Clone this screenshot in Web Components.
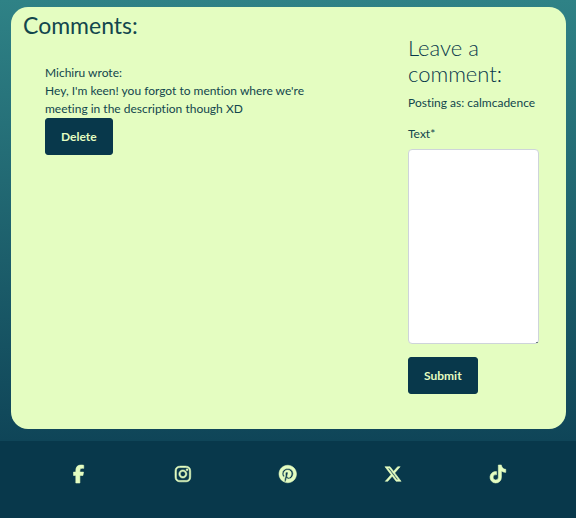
<!DOCTYPE html>
<html lang="en">
<head>
<meta charset="utf-8">
<meta name="viewport" content="width=device-width, initial-scale=1">
<title>Comments</title>
<style>
  :root { --lime: #e4fdc1; --navy: #08384b; --ink: #12464d; }
  html { background: var(--navy); }
  body { margin: 0; font-family: Lato, "Liberation Sans", sans-serif; font-size: 12px; font-weight: 400; line-height: 18px; font-variant-ligatures: none; color: var(--ink); }
</style>
</head>
<body>
<event-page>
  <comments-card>
    <comment-list slot="list">
      <user-comment author="Michiru">Hey, I'm keen! you forgot to mention where we're meeting in the description though XD</user-comment>
    </comment-list>
    <comment-form slot="form" user="calmcadence"></comment-form>
  </comments-card>
  <social-footer slot="footer"></social-footer>
</event-page>
<script>
const define = (name, html, setup) => customElements.define(name, class extends HTMLElement {
  connectedCallback() {
    if (this.shadowRoot) return;
    this.attachShadow({ mode: "open" }).innerHTML = html;
    if (setup) setup(this, this.shadowRoot);
  }
});

define("event-page", `
  <style>
    :host { display: flex; flex-direction: column; min-height: 100vh; }
    main { padding: 7px 10px 12px 11px; background: linear-gradient(#2f8286, #0f4558); }
  </style>
  <main><slot></slot></main>
  <slot name="footer"></slot>`);

define("comments-card", `
  <style>
    :host { display: grid; grid-template-columns: minmax(0, 2fr) minmax(0, 1fr); box-sizing: border-box; background: var(--lime); border-radius: 17px; }
    .form { padding: 28px 27px 35px 27px; }
  </style>
  <slot name="list"></slot>
  <div class="form"><slot name="form"></slot></div>`);

define("comment-list", `
  <style>
    :host { display: block; padding: 4px 0 0 12px; }
    h2 { margin: 0; font-size: 23px; font-weight: 400; line-height: 28px; }
    .items { display: grid; gap: 20px; padding: 25px 60px 0 22px; }
  </style>
  <h2>Comments:</h2>
  <div class="items"><slot></slot></div>`);

define("pill-button", `
  <style>
    :host { display: block; }
    button { display: block; margin: 0; padding: 9px 15px; border: 1px solid var(--navy); border-radius: 3px; background: var(--navy); color: var(--lime); font: 700 12px/17px Lato, "Liberation Sans", sans-serif; cursor: pointer; }
  </style>
  <button type="button"><slot></slot></button>`);

define("user-comment", `
  <style>
    :host { display: block; }
    p { margin: 0; }
  </style>
  <p class="author"></p>
  <p><slot></slot></p>
  <pill-button>Delete</pill-button>`, (host, root) => {
  root.querySelector(".author").textContent = host.getAttribute("author") + " wrote:";
});

define("comment-form", `
  <style>
    :host { display: block; }
    h3 { margin: 0 0 7px; font-size: 22px; font-weight: 300; line-height: 26px; color: var(--navy); }
    p { margin: 0 0 13px; }
    label { display: block; margin-bottom: 6px; }
    textarea { display: block; box-sizing: border-box; width: 100%; height: 195px; margin: 0 0 13px; padding: 6px 12px; border: 1px solid #ced4da; border-radius: 4px; background: #fff; color: var(--ink); font: inherit; resize: vertical; }
    textarea::-webkit-resizer { background: linear-gradient(#6b7c80, #6b7c80) right bottom / 2px 1px no-repeat; }
  </style>
  <form>
    <h3>Leave a comment:</h3>
    <p></p>
    <label for="text">Text*</label>
    <textarea id="text" required></textarea>
    <pill-button>Submit</pill-button>
  </form>`, (host, root) => {
  root.querySelector("p").textContent = "Posting as: " + host.getAttribute("user");
});

const icons = [
  ["Facebook", "0 0 320 512", "M80 299.3V512H196V299.3h86.5l18-97.8H196V166.9c0-51.7 20.3-71.5 72.7-71.5c16.3 0 29.4 .4 37 1.2V7.9C291.4 4 256.4 0 236.2 0C129.3 0 80 50.5 80 159.4v42.1H14v97.8H80z"],
  ["Instagram", "0 0 448 512", "M224.1 141c-63.6 0-114.9 51.3-114.9 114.9s51.3 114.9 114.9 114.9S339 319.5 339 255.9 287.7 141 224.1 141zm0 189.6c-41.1 0-74.7-33.5-74.7-74.7s33.5-74.7 74.7-74.7 74.7 33.5 74.7 74.7-33.6 74.7-74.7 74.7zm146.4-194.3c0 14.9-12 26.8-26.8 26.8-14.9 0-26.8-12-26.8-26.8s12-26.8 26.8-26.8 26.8 12 26.8 26.8zm76.1 27.2c-1.7-35.9-9.9-67.7-36.2-93.9-26.2-26.2-58-34.4-93.9-36.2-37-2.1-147.9-2.1-184.9 0-35.8 1.7-67.6 9.9-93.9 36.1s-34.4 58-36.2 93.9c-2.1 37-2.1 147.9 0 184.9 1.7 35.9 9.9 67.7 36.2 93.9s58 34.4 93.9 36.2c37 2.1 147.9 2.1 184.9 0 35.9-1.7 67.7-9.9 93.9-36.2 26.2-26.2 34.4-58 36.2-93.9 2.1-37 2.1-147.8 0-184.8zM398.8 388c-7.8 19.6-22.9 34.7-42.6 42.6-29.5 11.7-99.5 9-132.1 9s-102.7 2.6-132.1-9c-19.6-7.8-34.7-22.9-42.6-42.6-11.7-29.5-9-99.5-9-132.1s-2.6-102.7 9-132.1c7.8-19.6 22.9-34.7 42.6-42.6 29.5-11.7 99.5-9 132.1-9s102.7-2.6 132.1 9c19.6 7.8 34.7 22.9 42.6 42.6 11.7 29.5 9 99.5 9 132.1s2.7 102.7-9 132.1z"],
  ["Pinterest", "0 0 496 512", "M496 256c0 137-111 248-248 248-25.6 0-50.2-3.9-73.4-11.1 10.1-16.5 25.2-43.5 30.8-65 3-11.6 15.4-59 15.4-59 8.1 15.4 31.7 28.5 56.8 28.5 74.8 0 128.7-68.8 128.7-154.3 0-81.9-66.9-143.2-152.9-143.2-107 0-163.9 71.8-163.9 150.1 0 36.4 19.4 81.7 50.3 96.1 4.7 2.2 7.2 1.2 8.3-3.3.8-3.4 5-20.3 6.9-28.1.6-2.5.3-4.7-1.7-7.1-10.1-12.5-18.3-35.3-18.3-56.6 0-54.7 41.4-107.6 112-107.6 60.9 0 103.6 41.5 103.6 100.9 0 67.1-33.9 113.6-78 113.6-24.3 0-42.6-20.1-36.7-44.8 7-29.5 20.5-61.3 20.5-82.6 0-19-10.2-34.9-31.4-34.9-24.9 0-44.9 25.7-44.9 60.2 0 22 7.4 36.8 7.4 36.8s-24.5 103.8-29 123.2c-5 21.4-3 51.6-.9 71.2C65.4 450.9 0 361.1 0 256 0 119 111 8 248 8s248 111 248 248z"],
  ["X", "0 0 512 512", "M389.2 48h70.6L305.6 224.2 487 464H345L233.7 318.6 106.5 464H35.8L200.7 275.5 26.8 48H172.4L272.9 180.9 389.2 48zM364.4 421.8h39.1L151.1 88h-42L364.4 421.8z"],
  ["TikTok", "0 0 448 512", "M448 209.9a210.1 210.1 0 0 1-122.8-39.3V349.4A162.6 162.6 0 1 1 185 188.3V278.2a74.6 74.6 0 1 0 52.2 71.2V0l88 0a121.2 121.2 0 0 0 1.9 22.2A122.2 122.2 0 0 0 381 102.4a121.4 121.4 0 0 0 67 20.1z"]
];

define("social-footer", `
  <style>
    :host { display: block; flex: 1; background: var(--navy); }
    nav { display: grid; grid-template-columns: repeat(5, 1fr); justify-items: center; padding: 24px 26px; }
    a { display: block; color: var(--lime); }
    svg { display: block; height: 18px; fill: currentColor; stroke: currentColor; stroke-width: 16px; overflow: visible; }
  </style>
  <nav aria-label="Social media">${icons.map(([name, box, d]) =>
    `<a href="#" aria-label="${name}"><svg viewBox="${box}" aria-hidden="true"><path d="${d}"/></svg></a>`).join("")}</nav>`);
</script>
</body>
</html>
